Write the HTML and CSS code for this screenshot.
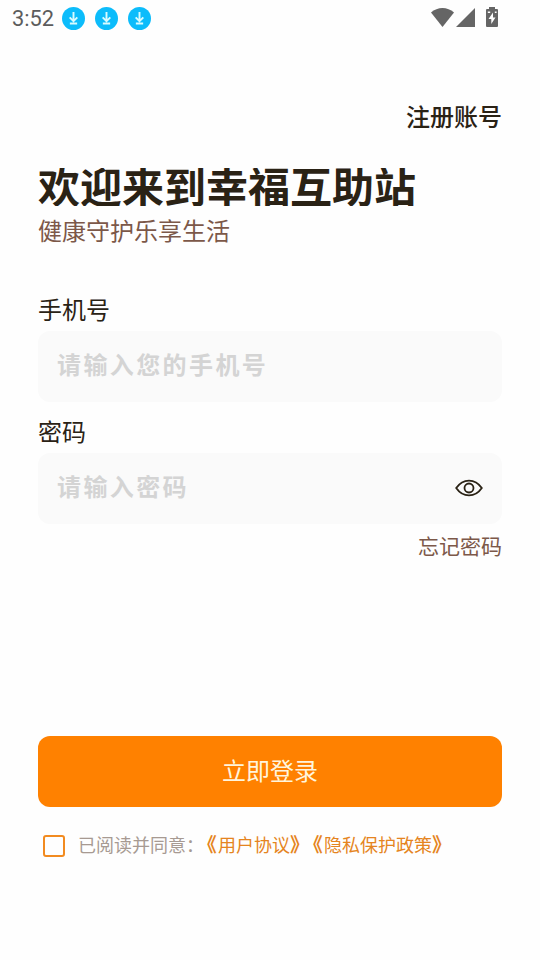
FILE: index.html
```html
<!DOCTYPE html>
<html lang="zh-CN">
<head>
<meta charset="utf-8">
<title>登录</title>
<link rel="stylesheet" href="styles.css">
</head>
<body>
<header class="status">
  <span class="time">3:52</span>
  <div class="downloads">
    <svg class="download" viewBox="0 0 24 24"><circle cx="12" cy="12" r="12"/><path d="M12 5.300v9.200M8 10.800l4 4 4-4M8.200 17.300h7.600"/></svg>
    <svg class="download" viewBox="0 0 24 24"><circle cx="12" cy="12" r="12"/><path d="M12 5.300v9.200M8 10.800l4 4 4-4M8.200 17.300h7.600"/></svg>
    <svg class="download" viewBox="0 0 24 24"><circle cx="12" cy="12" r="12"/><path d="M12 5.300v9.200M8 10.800l4 4 4-4M8.200 17.300h7.600"/></svg>
  </div>
  <div class="system">
    <svg class="wifi" viewBox="0 0 23 19"><path d="M0 4.500C6.500-1.500 16.500-1.500 23 4.500L11.500 19Z"/></svg>
    <svg class="signal" viewBox="0 0 19 19"><path d="M19 0v19H0Z"/></svg>
    <svg class="battery" viewBox="0 0 12 20"><path fill-rule="evenodd" d="M3 0h6v2h2q1 0 1 1v16q0 1-1 1H1q-1 0-1-1V3q0-1 1-1h2ZM7 5.500L2.500 12h2.800v5L9.500 10.500H7ZM1.800 4.500v1.500h2.400V4.500ZM8.800 4.500v1.500h1.800V4.500Z"/></svg>
  </div>
</header>
<main class="page">
  <a class="register">注册账号</a>
  <h1 class="title">欢迎来到幸福互助站</h1>
  <p class="subtitle">健康守护乐享生活</p>
  <form class="form">
    <label class="label">手机号</label>
    <div class="field"><span class="placeholder">请输入您的手机号</span></div>
    <label class="label">密码</label>
    <div class="field">
      <span class="placeholder">请输入密码</span>
      <svg class="eye" viewBox="0 0 28 18"><path d="M1.200 9C8-.900 20-.900 26.800 9C20 18.900 8 18.900 1.200 9Z"/><circle cx="14" cy="9" r="4.500"/></svg>
    </div>
    <a class="forgot">忘记密码</a>
    <div class="submit">立即登录</div>
    <div class="agreement">
      <span class="checkbox"></span>
      <span class="agree-text">已阅读并同意：</span>
      <a class="policy"><b>《</b>用户协议<b>》</b></a>
      <a class="policy"><b>《</b>隐私保护政策<b>》</b></a>
    </div>
  </form>
</main>
</body>
</html>
```

FILE: styles.css
```css
* { box-sizing: border-box; }
body {
  margin: 0;
  background: #fefefe;
  color: #2a2215;
  font-family: "Noto Sans CJK SC", sans-serif;
  font-size: 24px;
}
.status {
  display: flex;
  align-items: center;
  height: 37px;
  padding: 0 42px 0 12px;
}
.time {
  width: 50px;
  font: 21.8px/37px Roboto, sans-serif;
  color: #5c5c5c;
}
.downloads { display: flex; gap: 10px; }
.download { width: 23px; height: 23px; }
.download circle { fill: #0cbcfb; }
.download path { fill: none; stroke: #d9fbff; stroke-width: 2; }
.system {
  display: flex;
  align-items: flex-end;
  height: 20px;
  margin: -3px 0 0 auto;
  fill: #656565;
}
.wifi { width: 23px; height: 19px; margin-right: 2px; }
.signal { width: 19px; height: 19px; margin-right: 11px; }
.battery { width: 12px; height: 20px; }
.page {
  display: flex;
  flex-direction: column;
  padding: 61px 38px 0;
}
.register {
  align-self: flex-end;
  line-height: 36px;
  font-weight: 500;
}
.title {
  height: 38px;
  margin: 34px 0 0;
  overflow: hidden;
  font-size: 42px;
  line-height: 34px;
  font-weight: 700;
}
.subtitle {
  margin: 6px 0 43px;
  line-height: 36px;
  color: #7c5849;
}
.form { display: flex; flex-direction: column; }
.label { line-height: 36px; }
.field {
  display: flex;
  align-items: center;
  justify-content: space-between;
  height: 71px;
  margin: 4px 0 11px;
  padding: 0 19px;
  border-radius: 12px;
  background: #fafafa;
}
.placeholder {
  margin-top: -6px;
  color: #d4d4d4;
  font-weight: 700;
  letter-spacing: 2.4px;
}
.eye { width: 28px; height: 18px; margin-top: -2px; fill: none; stroke: #2a2215; stroke-width: 1.8; }
.forgot {
  align-self: flex-end;
  margin-top: -5px;
  font-size: 21px;
  line-height: 30px;
  color: #7c5849;
}
.submit {
  height: 71px;
  margin-top: 176px;
  border-radius: 12px;
  background: #ff8100;
  color: #fff5dd;
  line-height: 67px;
  text-align: center;
}
.agreement {
  display: flex;
  align-items: center;
  height: 26px;
  margin-top: 24px;
  padding-left: 5px;
  font-size: 18px;
  line-height: 26px;
}
.checkbox {
  width: 22px;
  height: 22px;
  margin: 4px 13px 0 0;
  border: 2px solid #f28b20;
  border-radius: 3px;
}
.agree-text { color: #a79a92; }
.policy {
  display: flex;
  margin-left: 3px;
  color: #e58420;
}
.policy b {
  width: 11px;
  font-size: 19.5px;
  font-weight: 700;
  font-feature-settings: "halt";
  text-spacing-trim: space-all;
}
.policy + .policy { margin-left: 12px; }
```
